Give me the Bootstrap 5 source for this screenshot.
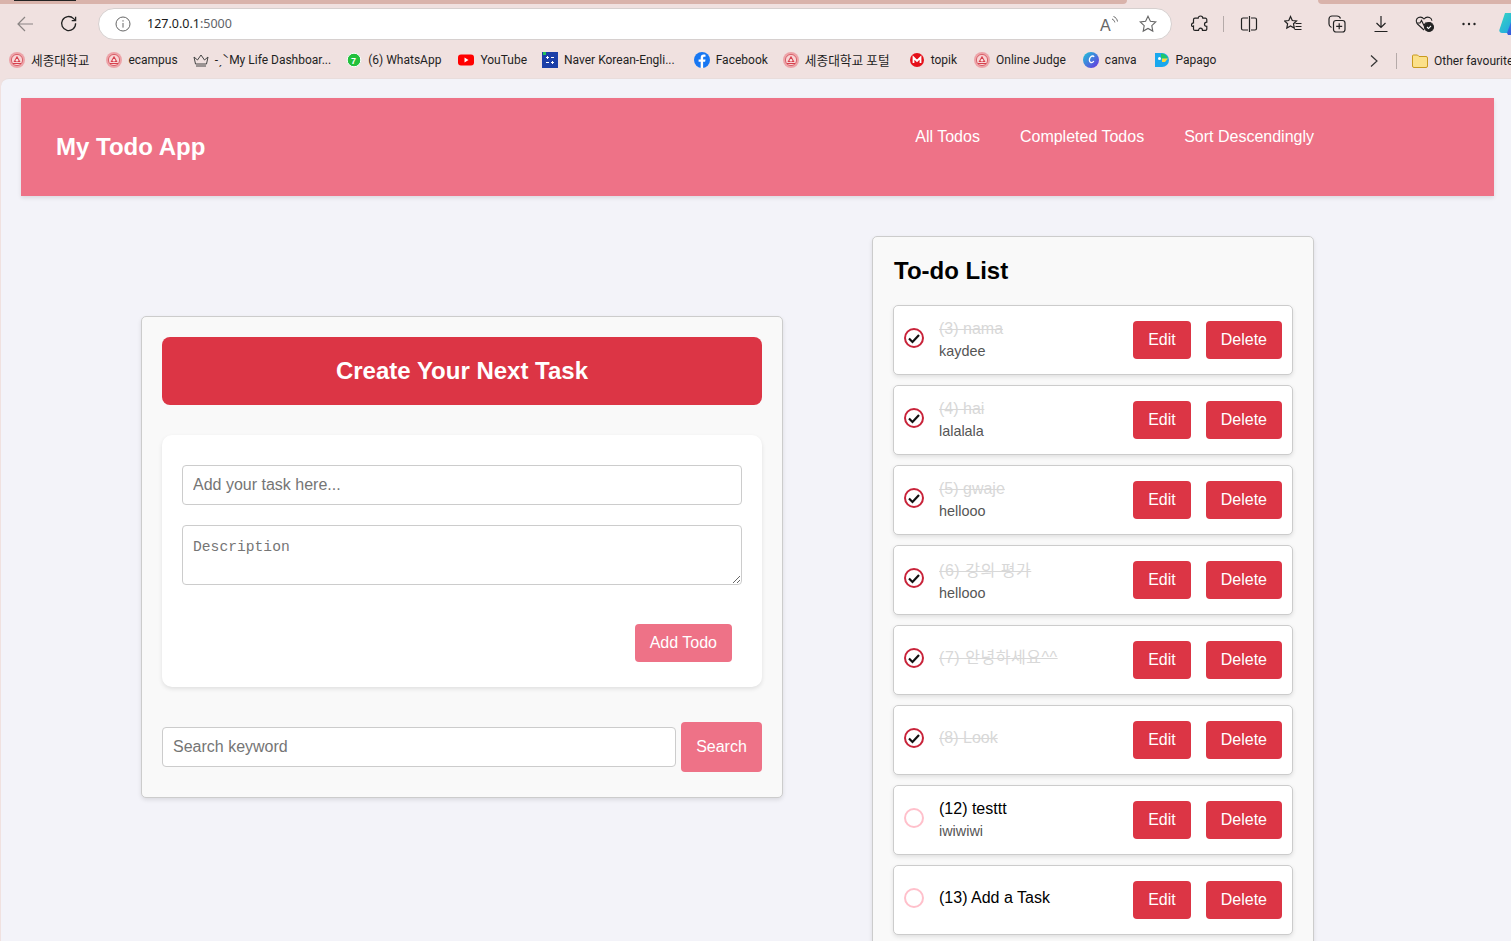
<!DOCTYPE html>
<html lang="en">

<head>
    <meta charset="utf-8">
    <title>My Todo App</title>
    <meta name="viewport" content="width=device-width, initial-scale=1">
    <link href="https://cdn.jsdelivr.net/npm/bootstrap@5.3.2/dist/css/bootstrap.min.css" rel="stylesheet">
    <script src="https://cdn.jsdelivr.net/npm/bootstrap@5.3.2/dist/js/bootstrap.bundle.min.js"></script>
    <style>
        html, body {
            height: 100%;
            overflow: hidden;
        }

        body {
            font-family: "Liberation Sans", "Noto Sans CJK KR", sans-serif;
            background-color: #f0e1e0;
            color: #000;
        }

        /* browser chrome */
        .tab-strip {
            height: 4px;
        }

        .tab-strip-left {
            width: 1127px;
            background-color: #d9b3ab;
            border-bottom-right-radius: 4px;
        }

        .tab-strip-gap {
            width: 191px;
        }

        .tab-strip-right {
            background-color: #d9b3ab;
            border-bottom-left-radius: 4px;
        }

        .active-tab-edge {
            width: 62px;
            height: 1px;
            margin-left: 14px;
            background-color: #222;
        }

        .tool-row {
            height: 39px;
            padding-left: 3px;
            overflow: hidden;
        }

        .tool-cell {
            flex: 0 0 44px;
            height: 31px;
        }

        .tool-sep {
            flex: 0 0 1px;
            height: 16px;
            margin-right: 3px;
            margin-left: 1px;
            background-color: #b5aaa9;
        }

        .address-bar {
            flex: 0 0 1074px;
            height: 32px;
            margin: 0 6px 0 7px;
            padding: 0 14px 0 16px;
            background-color: #fff;
            border: 1px solid #d6d0cf;
            border-radius: 16px;
            font-family: "Noto Sans", sans-serif;
            font-size: 12.5px;
            color: #1a1a1a;
        }

        .address-text {
            padding-top: 2px;
        }

        .address-port {
            color: #5f6368;
        }

        .read-aloud {
            font-family: "Liberation Sans", sans-serif;
            font-size: 16px;
            fill: #666;
        }

        .star-gap {
            margin-left: 21px;
        }

        .copilot-mark {
            flex: 0 0 24px;
            margin-left: 8px;
        }

        .bookmark-row {
            height: 35px;
            padding-left: 9px;
            font-family: "Roboto", "Noto Sans CJK KR", sans-serif;
            font-size: 12px;
            color: #1f1f1f;
            overflow: hidden;
            white-space: nowrap;
        }

        .bookmark-list {
            flex: 0 0 1360px;
        }

        .bookmark-item {
            gap: 6px;
            margin-right: 17px;
        }

        .bookmark-item.bookmark-tight {
            margin-right: 15px;
        }

        .bookmark-item.bookmark-wide {
            margin-right: 19px;
        }

        .bookmark-ko {
            font-size: 12.7px;
        }

        .bookmark-end {
            flex: 0 0 auto;
        }

        .bookmark-sep {
            flex: 0 0 1px;
            width: 1px;
            height: 16px;
            margin: 0 15px 0 17px;
            background-color: #b5aaa9;
        }

        .favourites-box {
            gap: 6px;
        }

        /* page */
        .page-area {
            height: 863px;
            margin-left: 1px;
            background-color: #f3f3f9;
            border-top: 1px solid #e8dddc;
            border-top-left-radius: 8px;
            overflow: hidden;
        }

        .app-navbar {
            height: 98px;
            margin: 19px 17px 0 20px;
            padding: 0 160px 0 35px;
            background-color: #ee7287;
            box-shadow: 0 2px 4px rgba(0, 0, 0, 0.1);
        }

        .app-brand {
            font-size: 24px;
            font-weight: 700;
            color: #fff;
            padding: 0;
            margin: 0;
        }

        .app-brand:hover {
            color: #fff;
        }

        .app-links {
            margin-bottom: 20px;
        }

        .app-navbar .app-links .nav-link {
            padding: 0 20px;
            color: #fff;
            font-size: 16px;
        }

        .main-row {
            padding-left: 140px;
            gap: 89px;
        }

        .panel {
            background-color: #f9f9f9;
            border: 1px solid #ccc;
            border-radius: 5px;
            box-shadow: 0 2px 4px rgba(0, 0, 0, 0.1);
        }

        .create-panel {
            flex: 0 0 642px;
            margin-top: 120px;
            padding: 20px 20px 25px;
        }

        .create-header {
            height: 68px;
            margin-bottom: 30px;
            background-color: #dc3545;
            border-radius: 8px;
            color: #fff;
            font-size: 24px;
            font-weight: 700;
        }

        .form-box {
            height: 252px;
            padding: 30px 20px 0;
            background-color: #fff;
            border-radius: 10px;
            box-shadow: 0 2px 4px rgba(0, 0, 0, 0.1);
        }

        .plain-input {
            height: 40px;
            padding: 0 10px;
            border: 1px solid #ccc;
            border-radius: 4px;
            font-size: 16px;
            font-family: "Liberation Sans", sans-serif;
        }

        .plain-input::placeholder {
            color: #757575;
        }

        .plain-area {
            height: 60px;
            margin-top: 20px;
            padding: 13px 10px 10px;
            border: 1px solid #ccc;
            border-radius: 4px;
            font-family: "Liberation Mono", monospace;
            font-size: 14.67px;
            line-height: 1.2;
        }

        .plain-area::placeholder {
            color: #757575;
        }

        .pink-btn {
            background-color: #ee7287;
            border: none;
            border-radius: 4px;
            color: #fff;
            font-size: 16px;
            padding: 0 15px;
        }

        .pink-btn:hover {
            background-color: #e96279;
            color: #fff;
        }

        .add-btn {
            height: 38px;
            margin: 39px 10px 0 0;
        }

        .search-row {
            margin-top: 35px;
            gap: 5px;
        }

        .search-btn {
            flex: 0 0 81px;
            height: 50px;
        }

        .list-panel {
            flex: 0 0 442px;
            margin-top: 40px;
            padding: 20px 20px 30px;
        }

        .list-title {
            font-size: 24px;
            font-weight: 700;
            line-height: 1.2;
            margin: 0 0 19px 1px;
        }

        .todo-item {
            height: 70px;
            margin-bottom: 10px;
            padding: 0 10px;
            background-color: #fff;
            border: 1px solid #ccc;
            border-radius: 5px;
            box-shadow: 0 2px 4px rgba(0, 0, 0, 0.1);
        }

        .todo-tick {
            flex: 0 0 20px;
            width: 20px;
            height: 20px;
            margin: 0 15px 4px 0;
        }

        .todo-text {
            padding-bottom: 3px;
        }

        .todo-low {
            padding-top: 4px;
        }

        .todo-name {
            font-size: 16px;
            line-height: 24px;
        }

        .todo-hangul {
            letter-spacing: 0.55px;
        }

        .todo-done {
            color: #d8d8d8;
            text-decoration: line-through;
        }

        .todo-desc {
            font-size: 14.4px;
            line-height: 21px;
            color: #555;
            margin-bottom: -2px;
        }

        .red-btn {
            height: 38px;
            padding: 0 15px;
            border: none;
            border-radius: 4px;
            font-size: 16px;
        }

        .edit-gap {
            margin-right: 15px;
        }
    </style>
</head>

<body>
    <svg width="0" height="0" class="position-absolute">
        <symbol id="seal" viewBox="0 0 16 16">
            <circle cx="8" cy="8" r="8" fill="#eda3a8"/>
            <circle cx="8" cy="8" r="5.600" fill="#f8d5d6" stroke="#d9626b"/>
            <path d="M8 3.800l3.500 6.200H4.500z" fill="#d63f4c"/>
            <circle cx="8" cy="8.200" r="1.300" fill="#fbe6e6"/>
            <path d="M4 11.500h8" stroke="#d63f4c"/>
        </symbol>
        <symbol id="tick-on" viewBox="0 0 20 20">
            <circle cx="10" cy="10" r="9" fill="#fff" stroke="#c8233a" stroke-width="2"/>
            <path d="M5 10.500l3.500 3.500 6.500-7" fill="none" stroke="#111" stroke-width="2.200"/>
        </symbol>
        <symbol id="tick-off" viewBox="0 0 20 20">
            <circle cx="10" cy="10" r="9" fill="#fff" stroke="#ffc0cb" stroke-width="2"/>
        </symbol>
    </svg>

    <div class="tab-strip d-flex">
        <div class="tab-strip-left"><div class="active-tab-edge"></div></div>
        <div class="tab-strip-gap"></div>
        <div class="tab-strip-right flex-grow-1"></div>
    </div>

    <div class="tool-row d-flex align-items-center">
        <div class="tool-cell d-flex align-items-center justify-content-center">
            <svg width="18" height="18" viewBox="0 0 18 18" fill="none" stroke="#8a8483" stroke-width="1.2"><path d="M17 9H2M9 2L2 9l7 7"/></svg>
        </div>
        <div class="tool-cell d-flex align-items-center justify-content-center">
            <svg width="18" height="18" viewBox="0 0 18 18" fill="none" stroke="#222" stroke-width="1.3"><path d="M15.600 8.200a7 7 0 1 1-2-4.600l2 2M15.600 1.800v3.900h-3.900"/></svg>
        </div>
        <div class="address-bar d-flex align-items-center">
            <svg width="16" height="16" viewBox="0 0 16 16" class="me-3" fill="none" stroke="#666"><circle cx="8" cy="8" r="7"/><path d="M8 7v4.600M8 4.200v1.400"/></svg>
            <span class="address-text">127.0.0.1<span class="address-port">:5000</span></span>
            <svg width="20" height="22" viewBox="0 0 20 22" class="ms-auto">
                <text x="2" y="17.500" class="read-aloud">A</text>
                <path d="M14 6c1.500.6 2.500 1.800 2.800 3.400M15.500 3.500c2.200.8 3.600 2.600 4 5" fill="none" stroke="#666"/>
            </svg>
            <svg width="18" height="18" viewBox="0 0 18 18" class="star-gap" fill="none" stroke="#666" stroke-width="1.100"><path d="M9 1.200l2.400 5 5.400.7-4 3.800 1 5.400L9 13.500l-4.800 2.600 1-5.400-4-3.800 5.400-.7z"/></svg>
        </div>
        <div class="tool-cell d-flex align-items-center justify-content-center">
            <svg width="18" height="18" viewBox="0 0 18 18" fill="none" stroke="#222" stroke-width="1.2"><path d="M7.200 3.200C7.200 1.800 8.200 1 9.500 1s2.300.8 2.300 2.200h2.500a1.500 1.500 0 0 1 1.500 1.500v2.500c-1.400 0-2.300.9-2.300 2.100s.9 2.100 2.300 2.100v2.500a1.500 1.500 0 0 1-1.500 1.500h-2.800c0-1.300-.9-2.200-2-2.200s-2 .9-2 2.200H4a1.500 1.500 0 0 1-1.500-1.500v-2.800C1.200 12 .5 11 .5 9.900s.7-2.100 2-2.100V4.700a1.500 1.500 0 0 1 1.500-1.500z"/></svg>
        </div>
        <div class="tool-sep"></div>
        <div class="tool-cell d-flex align-items-center justify-content-center">
            <svg width="18" height="18" viewBox="0 0 18 18" fill="none" stroke="#222" stroke-width="1.2"><path d="M8 3H3a1.500 1.500 0 0 0-1.500 1.500v9A1.500 1.500 0 0 0 3 15h5M11 3h4a1.500 1.500 0 0 1 1.500 1.500v9A1.500 1.500 0 0 1 15 15h-4M9.500 1v16"/></svg>
        </div>
        <div class="tool-cell d-flex align-items-center justify-content-center">
            <svg width="18" height="18" viewBox="0 0 18 18" fill="none" stroke="#222" stroke-width="1.2"><path d="M6.500 1.500l1.800 4 4.200.5-3 2.800.8 4.300-3.800-2.100-3.700 2.100.8-4.300-3-2.800 4.200-.5zM11.500 8.500h6M11.500 11.500h6M10.500 14.500h7"/></svg>
        </div>
        <div class="tool-cell d-flex align-items-center justify-content-center">
            <svg width="18" height="18" viewBox="0 0 18 18" fill="none" stroke="#222" stroke-width="1.2"><rect x="5.500" y="5.500" width="11.500" height="11.500" rx="2.500"/><path d="M11.200 8.300v6M8.200 11.300h6M3.500 12.500C2 11.800 1 10.700 1 9V4a3 3 0 0 1 3-3h5c1.600 0 2.900 1 3.500 2.500"/></svg>
        </div>
        <div class="tool-cell d-flex align-items-center justify-content-center">
            <svg width="18" height="18" viewBox="0 0 18 18" fill="none" stroke="#222" stroke-width="1.2"><path d="M9 1v11.500M4.500 8l4.500 4.500L13.500 8M2.500 16.500h13"/></svg>
        </div>
        <div class="tool-cell d-flex align-items-center justify-content-center">
            <svg width="20" height="18" viewBox="0 0 20 18" fill="none" stroke="#222" stroke-width="1.1">
                <path d="M9 15L2.500 9C.5 7 1 3.500 3.500 2.500 5.500 1.700 7.600 2.300 9 4c1.400-1.700 3.500-2.300 5.500-1.500 1.500.6 2.300 1.900 2.400 3.300"/>
                <path d="M1.500 8h3.500l1.500-2.500 2.500 5L10.500 8h1.500"/>
                <circle cx="14" cy="12" r="4.500" fill="#222"/>
                <path d="M12 12l1.500 1.500 2.500-2.700" stroke="#fff"/>
            </svg>
        </div>
        <div class="tool-cell d-flex align-items-center justify-content-center">
            <svg width="16" height="4" viewBox="0 0 16 4" fill="#222"><circle cx="2.500" cy="2" r="1.200"/><circle cx="8" cy="2" r="1.200"/><circle cx="13.500" cy="2" r="1.200"/></svg>
        </div>
        <svg width="24" height="24" viewBox="0 0 24 24" class="copilot-mark">
            <defs>
                <linearGradient id="copilotTop" x1="0" y1="0" x2="1" y2="1"><stop offset="0" stop-color="#37d6c0"/><stop offset="1" stop-color="#1f9fe8"/></linearGradient>
                <linearGradient id="copilotLow" x1="0" y1="0" x2="1" y2="1"><stop offset="0" stop-color="#2f7fe8"/><stop offset="1" stop-color="#3b3fd0"/></linearGradient>
            </defs>
            <path d="M6 1h11L9 21H3c-2 0-3-1.500-2.500-3.500z" fill="url(#copilotTop)"/>
            <path d="M8 21l4-11 12 8c-1 3-3 5-6 5H9z" fill="url(#copilotLow)"/>
        </svg>
    </div>

    <div class="bookmark-row d-flex align-items-center">
        <div class="bookmark-list d-flex align-items-center">
            <div class="bookmark-item d-flex align-items-center"><svg width="16" height="16"><use href="#seal"/></svg><span class="bookmark-ko">세종대학교</span></div>
            <div class="bookmark-item bookmark-tight d-flex align-items-center"><svg width="16" height="16"><use href="#seal"/></svg><span>ecampus</span></div>
            <div class="bookmark-item bookmark-tight d-flex align-items-center">
                <svg width="16" height="16" viewBox="0 0 16 16" fill="none" stroke="#444"><path d="M1 5l3.500 3L8 3l3.500 5L15 5l-1.500 7h-11zM3 14h10"/></svg>
                <span>-ˏˋMy Life Dashboar...</span>
            </div>
            <div class="bookmark-item d-flex align-items-center">
                <svg width="16" height="16" viewBox="0 0 16 16"><circle cx="8" cy="8" r="6.800" fill="#22c03c" stroke="#fff"/><text x="5" y="11.500" font-size="9" font-weight="700" fill="#fff" font-family="Liberation Sans">7</text></svg>
                <span>(6) WhatsApp</span>
            </div>
            <div class="bookmark-item bookmark-tight d-flex align-items-center">
                <svg width="16" height="16" viewBox="0 0 16 16"><rect y="2.500" width="16" height="11" rx="3" fill="#f00"/><path d="M6.500 5.500v5l4-2.500z" fill="#fff"/></svg>
                <span>YouTube</span>
            </div>
            <div class="bookmark-item bookmark-wide d-flex align-items-center">
                <svg width="16" height="16" viewBox="0 0 16 16"><rect width="16" height="16" fill="#1b3fa8"/><rect x="1" width="3" height="3" fill="#22c25a"/><path d="M4 5.500h3M9 5.500h3M4 10.500h3M9 10.500h3M5.500 4v3M10.500 9v3" stroke="#fff"/></svg>
                <span>Naver Korean-Engli...</span>
            </div>
            <div class="bookmark-item bookmark-tight d-flex align-items-center">
                <svg width="16" height="16" viewBox="0 0 16 16"><circle cx="8" cy="8" r="8" fill="#1877f2"/><path d="M9.100 16V9.800h2l.4-2.400H9.100V6c0-.8.3-1.200 1.200-1.200h1.200V2.700c-.5-.1-1.100-.2-1.800-.2-2 0-3 1.200-3 3.200v1.700H4.600v2.400h2.100V16z" fill="#fff"/></svg>
                <span>Facebook</span>
            </div>
            <div class="bookmark-item bookmark-wide d-flex align-items-center"><svg width="16" height="16"><use href="#seal"/></svg><span class="bookmark-ko">세종대학교 포털</span></div>
            <div class="bookmark-item d-flex align-items-center">
                <svg width="16" height="16" viewBox="0 0 16 16"><circle cx="8" cy="8" r="7" fill="#e5101a"/><path d="M4.500 11V5.500L8 9l3.500-3.500V11" fill="none" stroke="#fff" stroke-width="1.800"/></svg>
                <span>topik</span>
            </div>
            <div class="bookmark-item d-flex align-items-center"><svg width="16" height="16"><use href="#seal"/></svg><span>Online Judge</span></div>
            <div class="bookmark-item d-flex align-items-center">
                <svg width="16" height="16" viewBox="0 0 16 16">
                    <defs><linearGradient id="canvaFill" x1="0" y1="0" x2="1" y2="1"><stop offset="0" stop-color="#1fc8d8"/><stop offset="1" stop-color="#6a2fe0"/></linearGradient></defs>
                    <circle cx="8" cy="8" r="8" fill="url(#canvaFill)"/>
                    <path d="M11 5c-.5-1.500-2.500-1.300-3.700.3-1.200 1.600-1.500 4.700.5 5.200 1.200.3 2.400-.5 3-1.500" fill="none" stroke="#fff" stroke-width="1.300"/>
                </svg>
                <span>canva</span>
            </div>
            <div class="bookmark-item d-flex align-items-center">
                <svg width="16" height="16" viewBox="0 0 16 16"><path d="M1 1h7a7 7 0 0 1 0 14H1z" fill="#19a8ee"/><path d="M7 1.500c3.500 0 6 2 7 5H7z" fill="#1fc76a"/><path d="M8 6.500h6l-3 3.500H8z" fill="#ffd83a"/><circle cx="5.500" cy="6.500" r="1.500" fill="#fff"/></svg>
                <span>Papago</span>
            </div>
        </div>
        <div class="bookmark-end d-flex align-items-center">
            <svg width="10" height="14" viewBox="0 0 10 14" class="flex-shrink-0" fill="none" stroke="#333" stroke-width="1.2"><path d="M2 1.500L8 7l-6 5.500"/></svg>
            <div class="bookmark-sep"></div>
            <div class="favourites-box d-flex align-items-center">
                <svg width="16" height="14" viewBox="0 0 16 14" class="flex-shrink-0"><path d="M.5 2a1 1 0 0 1 1-1h4l1.500 1.500h7a1.500 1.500 0 0 1 1.500 1.500v8a1.500 1.500 0 0 1-1.500 1.500h-12a1.500 1.500 0 0 1-1.500-1.500z" fill="#fbe08a" stroke="#c99a1e"/></svg>
                <span>Other favourites</span>
            </div>
        </div>
    </div>

    <div class="page-area">
        <nav class="navbar navbar-expand app-navbar">
            <a class="navbar-brand app-brand" href="#">My Todo App</a>
            <ul class="navbar-nav ms-auto app-links">
                <li class="nav-item"><a class="nav-link" href="#">All Todos</a></li>
                <li class="nav-item"><a class="nav-link" href="#">Completed Todos</a></li>
                <li class="nav-item"><a class="nav-link" href="#">Sort Descendingly</a></li>
            </ul>
        </nav>

        <div class="main-row d-flex align-items-start">
            <div class="panel create-panel">
                <div class="create-header d-flex align-items-center justify-content-center">Create Your Next Task</div>
                <form class="form-box d-flex flex-column">
                    <input type="text" class="form-control plain-input" placeholder="Add your task here...">
                    <textarea class="form-control plain-area" placeholder="Description"></textarea>
                    <button type="button" class="btn pink-btn add-btn align-self-end">Add Todo</button>
                </form>
                <div class="search-row d-flex align-items-center">
                    <input type="text" class="form-control plain-input" placeholder="Search keyword">
                    <button type="button" class="btn pink-btn search-btn">Search</button>
                </div>
            </div>

            <div class="panel list-panel">
                <h2 class="list-title">To-do List</h2>

                <div class="todo-item d-flex align-items-center">
                    <svg class="todo-tick"><use href="#tick-on"/></svg>
                    <div class="todo-text"><div class="todo-name todo-done">(3) nama</div><div class="todo-desc">kaydee</div></div>
                    <button class="btn btn-danger red-btn ms-auto edit-gap">Edit</button>
                    <button class="btn btn-danger red-btn">Delete</button>
                </div>
                <div class="todo-item d-flex align-items-center">
                    <svg class="todo-tick"><use href="#tick-on"/></svg>
                    <div class="todo-text"><div class="todo-name todo-done">(4) hai</div><div class="todo-desc">lalalala</div></div>
                    <button class="btn btn-danger red-btn ms-auto edit-gap">Edit</button>
                    <button class="btn btn-danger red-btn">Delete</button>
                </div>
                <div class="todo-item d-flex align-items-center">
                    <svg class="todo-tick"><use href="#tick-on"/></svg>
                    <div class="todo-text"><div class="todo-name todo-done">(5) gwaje</div><div class="todo-desc">hellooo</div></div>
                    <button class="btn btn-danger red-btn ms-auto edit-gap">Edit</button>
                    <button class="btn btn-danger red-btn">Delete</button>
                </div>
                <div class="todo-item d-flex align-items-center">
                    <svg class="todo-tick"><use href="#tick-on"/></svg>
                    <div class="todo-text todo-low"><div class="todo-name todo-done todo-hangul">(6) 강의 평가</div><div class="todo-desc">hellooo</div></div>
                    <button class="btn btn-danger red-btn ms-auto edit-gap">Edit</button>
                    <button class="btn btn-danger red-btn">Delete</button>
                </div>
                <div class="todo-item d-flex align-items-center">
                    <svg class="todo-tick"><use href="#tick-on"/></svg>
                    <div class="todo-text"><div class="todo-name todo-done todo-hangul">(7) 안녕하세요^^</div></div>
                    <button class="btn btn-danger red-btn ms-auto edit-gap">Edit</button>
                    <button class="btn btn-danger red-btn">Delete</button>
                </div>
                <div class="todo-item d-flex align-items-center">
                    <svg class="todo-tick"><use href="#tick-on"/></svg>
                    <div class="todo-text"><div class="todo-name todo-done">(8) Look</div></div>
                    <button class="btn btn-danger red-btn ms-auto edit-gap">Edit</button>
                    <button class="btn btn-danger red-btn">Delete</button>
                </div>
                <div class="todo-item d-flex align-items-center">
                    <svg class="todo-tick"><use href="#tick-off"/></svg>
                    <div class="todo-text"><div class="todo-name">(12) testtt</div><div class="todo-desc">iwiwiwi</div></div>
                    <button class="btn btn-danger red-btn ms-auto edit-gap">Edit</button>
                    <button class="btn btn-danger red-btn">Delete</button>
                </div>
                <div class="todo-item d-flex align-items-center">
                    <svg class="todo-tick"><use href="#tick-off"/></svg>
                    <div class="todo-text"><div class="todo-name">(13) Add a Task</div></div>
                    <button class="btn btn-danger red-btn ms-auto edit-gap">Edit</button>
                    <button class="btn btn-danger red-btn">Delete</button>
                </div>
            </div>
        </div>
    </div>
</body>

</html>
